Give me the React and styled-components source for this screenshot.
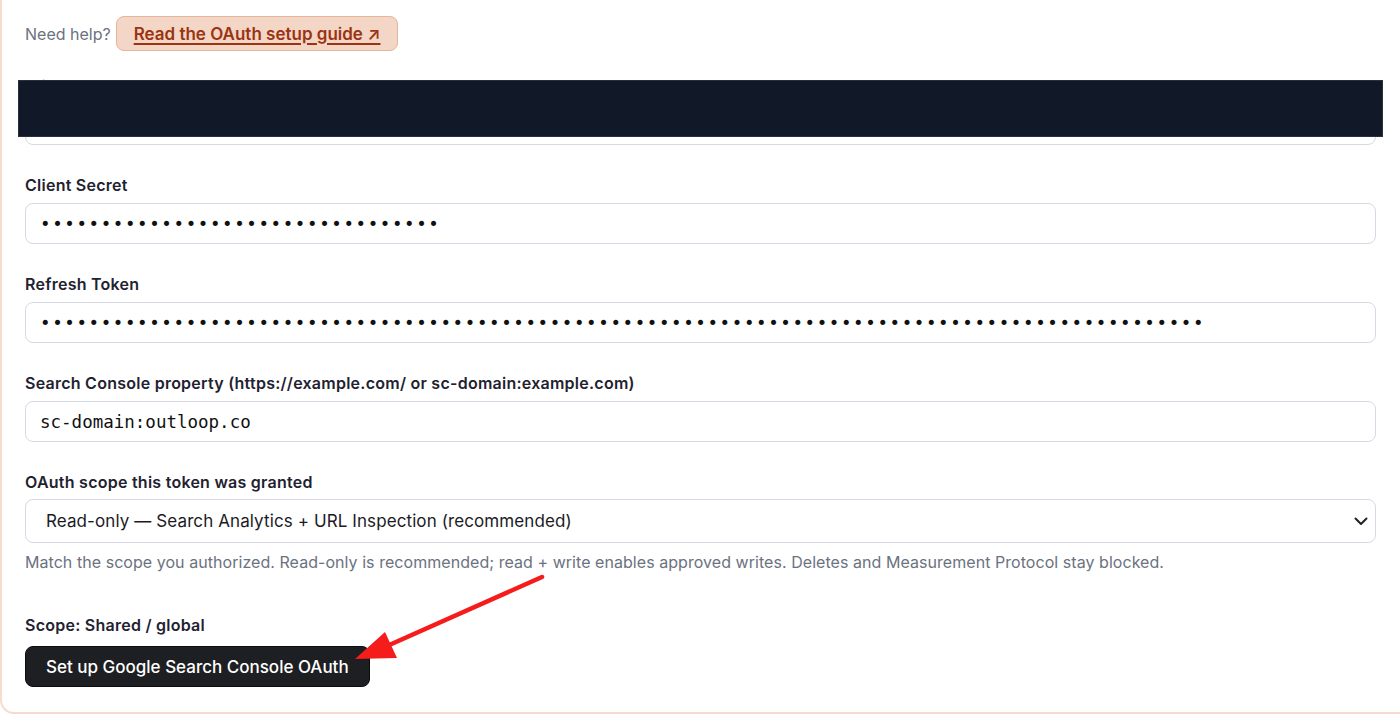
import styled, { createGlobalStyle } from "styled-components";

const GlobalStyle = createGlobalStyle`
  html, body {
    margin: 0;
    padding: 0;
    background: #ffffff;
    overflow: hidden;
  }
  body {
    font-family: Inter, "Liberation Sans", sans-serif;
    color: #1f2937;
  }
  * {
    box-sizing: border-box;
  }
`;

const Card = styled.section`
  position: relative;
  width: 1404px;
  height: 714px;
  padding: 16px 28px 0 23px;
  border: 2px solid #f6dccf;
  border-top: none;
  border-right: none;
  border-radius: 0 0 0 14px;
  display: flex;
  flex-direction: column;
`;

const HelpRow = styled.div`
  display: flex;
  align-items: center;
  gap: 5px;
  font-size: 16px;
  color: #6b7280;
  height: 35px;
  margin-bottom: 25px;
`;

const GuideLink = styled.a`
  display: inline-flex;
  align-items: center;
  height: 35px;
  padding: 0 17px;
  background: #f4d6c6;
  border: 1px solid #e6b69c;
  border-radius: 8px;
  color: #9a3412;
  font-weight: 600;
  font-size: 17px;
  text-decoration: underline;
  text-underline-offset: 3px;
  text-decoration-thickness: 2px;
`;

const Field = styled.div`
  position: relative;
  display: flex;
  flex-direction: column;
  gap: ${(p) => p.$gap || 8}px;
  margin-bottom: ${(p) => p.$mb ?? 30}px;
`;

const Label = styled.label`
  font-size: 16px;
  font-weight: 600;
  line-height: 20px;
  letter-spacing: 0.25px;
  color: #1f2230;
`;

const TextInput = styled.input`
  width: 100%;
  height: 41px;
  padding: 0 14px;
  border: 1.5px solid #d6d8e4;
  border-radius: 8px;
  font-family: "DejaVu Sans Mono", "Liberation Mono", monospace;
  font-size: 17.5px;
  color: #111;
  letter-spacing: ${(p) => (p.type === "password" ? "1.6px" : "0")};
  background: #fff;
  outline: none;
`;

const SelectBox = styled.div`
  display: flex;
  align-items: center;
  height: 44px;
  padding: 0 20px;
  border: 1.5px solid #d6d8e4;
  border-radius: 8px;
  font-size: 17px;
  letter-spacing: 0.1px;
  color: #1b1b1f;
`;

const Chevron = styled.svg`
  margin-left: auto;
  margin-right: -13px;
`;

const Hint = styled.p`
  margin: 2px 0 0;
  font-size: 16px;
  line-height: 20px;
  letter-spacing: 0.05px;
  color: #6b7280;
`;

const ScopeLabel = styled.div`
  font-size: 16px;
  font-weight: 600;
  line-height: 20px;
  letter-spacing: 0.25px;
  color: #1f2230;
  margin-bottom: 11px;
`;

const PrimaryButton = styled.button`
  align-self: flex-start;
  height: 41px;
  padding: 0 20px;
  border: 1px solid #0c0c0e;
  border-radius: 8px;
  background: #1e1f22;
  color: #fff;
  font-family: Inter, "Liberation Sans", sans-serif;
  font-size: 17px;
  font-weight: 500;
`;

const Redaction = styled.div`
  position: absolute;
  left: -7px;
  right: -7px;
  top: 4px;
  height: 57px;
  background: #111827;
  border: 1px solid #2a2f3d;
`;

const Arrow = styled.svg`
  position: absolute;
  left: 0;
  top: 0;
  pointer-events: none;
`;

export default function App() {
  return (
    <>
      <GlobalStyle />
      <Card>
        <HelpRow>
          Need help?
          <GuideLink href="#">Read the OAuth setup guide ↗</GuideLink>
        </HelpRow>

        <Field>
          <Label>Client ID</Label>
          <TextInput type="text" defaultValue="" readOnly />
          <Redaction />
        </Field>

        <Field>
          <Label>Client Secret</Label>
          <TextInput type="password" defaultValue={"x".repeat(33)} readOnly />
        </Field>

        <Field>
          <Label>Refresh Token</Label>
          <TextInput type="password" defaultValue={"x".repeat(96)} readOnly />
        </Field>

        <Field>
          <Label>Search Console property (https://example.com/ or sc-domain:example.com)</Label>
          <TextInput type="text" defaultValue="sc-domain:outloop.co" readOnly />
        </Field>

        <Field $gap={7} $mb={43}>
          <Label>OAuth scope this token was granted</Label>
          <SelectBox>
            Read-only — Search Analytics + URL Inspection (recommended)
            <Chevron width="14" height="9" viewBox="0 0 14 9">
              <path d="M1.5 1.5 L7 7 L12.5 1.5" fill="none" stroke="#222" strokeWidth="2" strokeLinecap="round" strokeLinejoin="round" />
            </Chevron>
          </SelectBox>
          <Hint>
            Match the scope you authorized. Read-only is recommended; read + write enables approved writes. Deletes and Measurement Protocol stay blocked.
          </Hint>
        </Field>

        <ScopeLabel>Scope: Shared / global</ScopeLabel>
        <PrimaryButton>Set up Google Search Console OAuth</PrimaryButton>

        <Arrow width="1400" height="717" viewBox="0 0 1400 717">
          <line x1="540" y1="577" x2="385" y2="646" stroke="#f51c1c" strokeWidth="4.5" strokeLinecap="round" />
          <polygon points="353,659 383,632 395,658" fill="#f51c1c" />
        </Arrow>
      </Card>
    </>
  );
}
